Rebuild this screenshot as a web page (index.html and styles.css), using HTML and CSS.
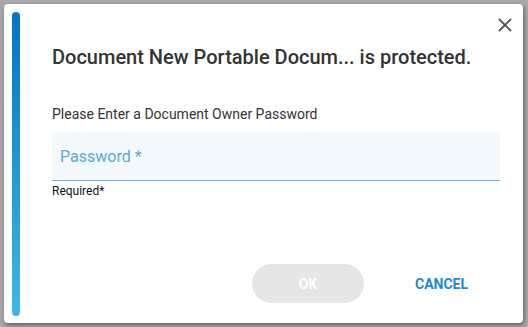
FILE: index.html
```html
<!DOCTYPE html>
<html>
<head>
<meta charset="utf-8">
<link rel="stylesheet" href="styles.css">
</head>
<body>
<div class="dialog">
  <div class="accent"></div>
  <div class="content">
    <h1 class="title">Document New Portable Docum... is protected.</h1>
    <div class="label">Please Enter a Document Owner Password</div>
    <div class="field"><span class="placeholder">Password *</span></div>
    <div class="helper">Required*</div>
    <div class="actions">
      <button class="btn ok">OK</button>
      <button class="btn cancel">CANCEL</button>
    </div>
  </div>
  <button class="close" aria-label="Close">
    <svg width="14" height="14" viewBox="0 0 14 14"><path d="M1 1L13 13M13 1L1 13" stroke="#555" stroke-width="1.8" fill="none"/></svg>
  </button>
</div>
</body>
</html>
```
FILE: styles.css
```css
html, body { margin: 0; padding: 0; }
body {
  background: #a8a8a8;
  width: 528px;
  height: 327px;
  overflow: hidden;
  font-family: Roboto, "Liberation Sans", sans-serif;
}
.dialog {
  position: relative;
  margin: 4px 0 0 4px;
  width: 519px;
  height: 319px;
  background: #fff;
  border-radius: 4px;
  box-shadow: 1px 2px 4px rgba(0,0,0,0.45);
  display: flex;
  box-sizing: border-box;
  padding: 8px 23px 7px 8px;
}
.accent {
  width: 8px;
  flex: none;
  border-radius: 4px;
  background: linear-gradient(to bottom, #0076c6, #3bb9e9);
}
.content {
  flex: 1;
  margin-left: 32px;
  display: flex;
  flex-direction: column;
}
.title {
  margin: 32px 0 0 0;
  font-size: 20px;
  font-weight: 500;
  color: #333;
  line-height: 26px;
}
.label {
  margin-top: 35px;
  font-size: 14px;
  color: #333;
  line-height: 18px;
}
.field {
  margin-top: 9px;
  height: 49px;
  box-sizing: border-box;
  background: #f3f8fd;
  border-bottom: 1px solid #6bb5e8;
  border-radius: 4px 4px 0 0;
  display: flex;
  align-items: center;
  padding-left: 8px;
}
.placeholder {
  font-size: 16px;
  color: #5aa8dc;
}
.helper {
  margin-top: 3px;
  font-size: 12px;
  color: #111;
  line-height: 14px;
}
.actions {
  margin-top: 66px;
  display: flex;
  align-items: center;
  padding-left: 200px;
}
.btn {
  font-family: Roboto, "Liberation Sans", sans-serif;
  font-weight: 700;
  font-size: 14px;
  border: none;
  background: none;
  cursor: pointer;
}
.ok {
  width: 112px;
  height: 39px;
  border-radius: 20px;
  background: #e6e6e6;
  color: #fff;
}
.cancel {
  margin-left: 47px;
  color: #1a8ad8;
  padding: 0 4px;
}
.close {
  position: absolute;
  top: 14px;
  right: 11px;
  border: none;
  background: none;
  padding: 0;
  width: 14px;
  height: 14px;
  display: flex;
}
```
